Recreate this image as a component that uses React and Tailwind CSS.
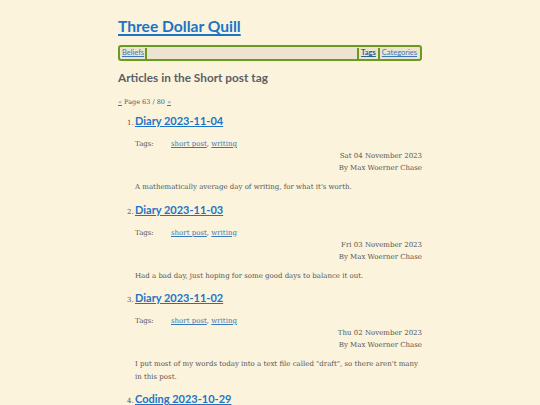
const posts = [
  { title: 'Diary 2023-11-04', date: 'Sat 04 November 2023', text: "A mathematically average day of writing, for what it's worth." },
  { title: 'Diary 2023-11-03', date: 'Fri 03 November 2023', text: 'Had a bad day, just hoping for some good days to balance it out.' },
  { title: 'Diary 2023-11-02', date: 'Thu 02 November 2023', text: 'I put most of my words today into a text file called "draft", so there aren\'t many in this post.' },
  { title: 'Coding 2023-10-29', date: 'Sun 29 October 2023', text: 'More work on the code.' },
]

const sans = "font-['Lato','Open_Sans',sans-serif]"
const serif = "font-['DejaVu_Serif','Liberation_Serif',serif]"

export default function App() {
  return (
    <div className="min-h-[405px] h-[405px] overflow-hidden bg-[#fcf3dc] text-[#555]">
      <div className="w-[304px] mx-auto pt-[14px]">
        <h1 className={`${sans} text-[15.6px] font-bold leading-[24px]`}>
          <a href="#" className="text-[#1b74c8] underline decoration-2 underline-offset-2">Three Dollar Quill</a>
        </h1>

        <nav className={`${sans} mt-[7px] flex items-center h-[16px] border-2 border-[#6b9a20] rounded-[3px] bg-[#ece4d0] text-[7.5px] px-[1px]`}>
          <a href="#" className="text-[#3a78b8] underline px-[1px]">Beliefs</a>
          <span className="w-[2px] h-[11px] bg-[#6b9a20]" />
          <div className="flex-1" />
          <span className="w-[2px] h-[11px] bg-[#6b9a20]" />
          <a href="#" className="text-[#2a5f92] font-bold underline px-[2px]">Tags</a>
          <span className="w-[2px] h-[11px] bg-[#6b9a20]" />
          <a href="#" className="text-[#3a78b8] underline px-[2px]">Categories</a>
        </nav>

        <h2 className={`${sans} mt-[9px] text-[11.8px] font-bold text-[#5a6066] leading-[16px]`}>Articles in the Short post tag</h2>

        <p className={`${serif} mt-[11px] text-[6.5px] leading-[10px]`}>
          <a href="#" className="text-[#3a78b8] underline">«</a> Page 63 / 80 <a href="#" className="text-[#3a78b8] underline">»</a>
        </p>

        <ol className="mt-[6px] pl-[17px]">
          {posts.map((p, i) => (
            <li key={i} className="mb-[8px]">
              <div className="flex items-baseline">
                <span className={`${serif} text-[7px] w-[0px] -ml-[8px] mr-[8px]`}>{i + 1}.</span>
                <a href="#" className={`${sans} text-[11px] font-bold text-[#1b74c8] underline leading-[16px]`}>{p.title}</a>
              </div>
              <div className={`${serif} text-[7px] leading-[12px]`}>
                <div className="mt-[9px] flex">
                  <span className="w-[36px]">Tags:</span>
                  <span>
                    <a href="#" className="text-[#3a78b8] underline">short post</a>, <a href="#" className="text-[#3a78b8] underline">writing</a>
                  </span>
                </div>
                <div className="text-right">{p.date}</div>
                <div className="text-right">By Max Woerner Chase</div>
                <p className="mt-[7px] leading-[12.5px]">{p.text}</p>
              </div>
            </li>
          ))}
        </ol>
      </div>
    </div>
  )
}
